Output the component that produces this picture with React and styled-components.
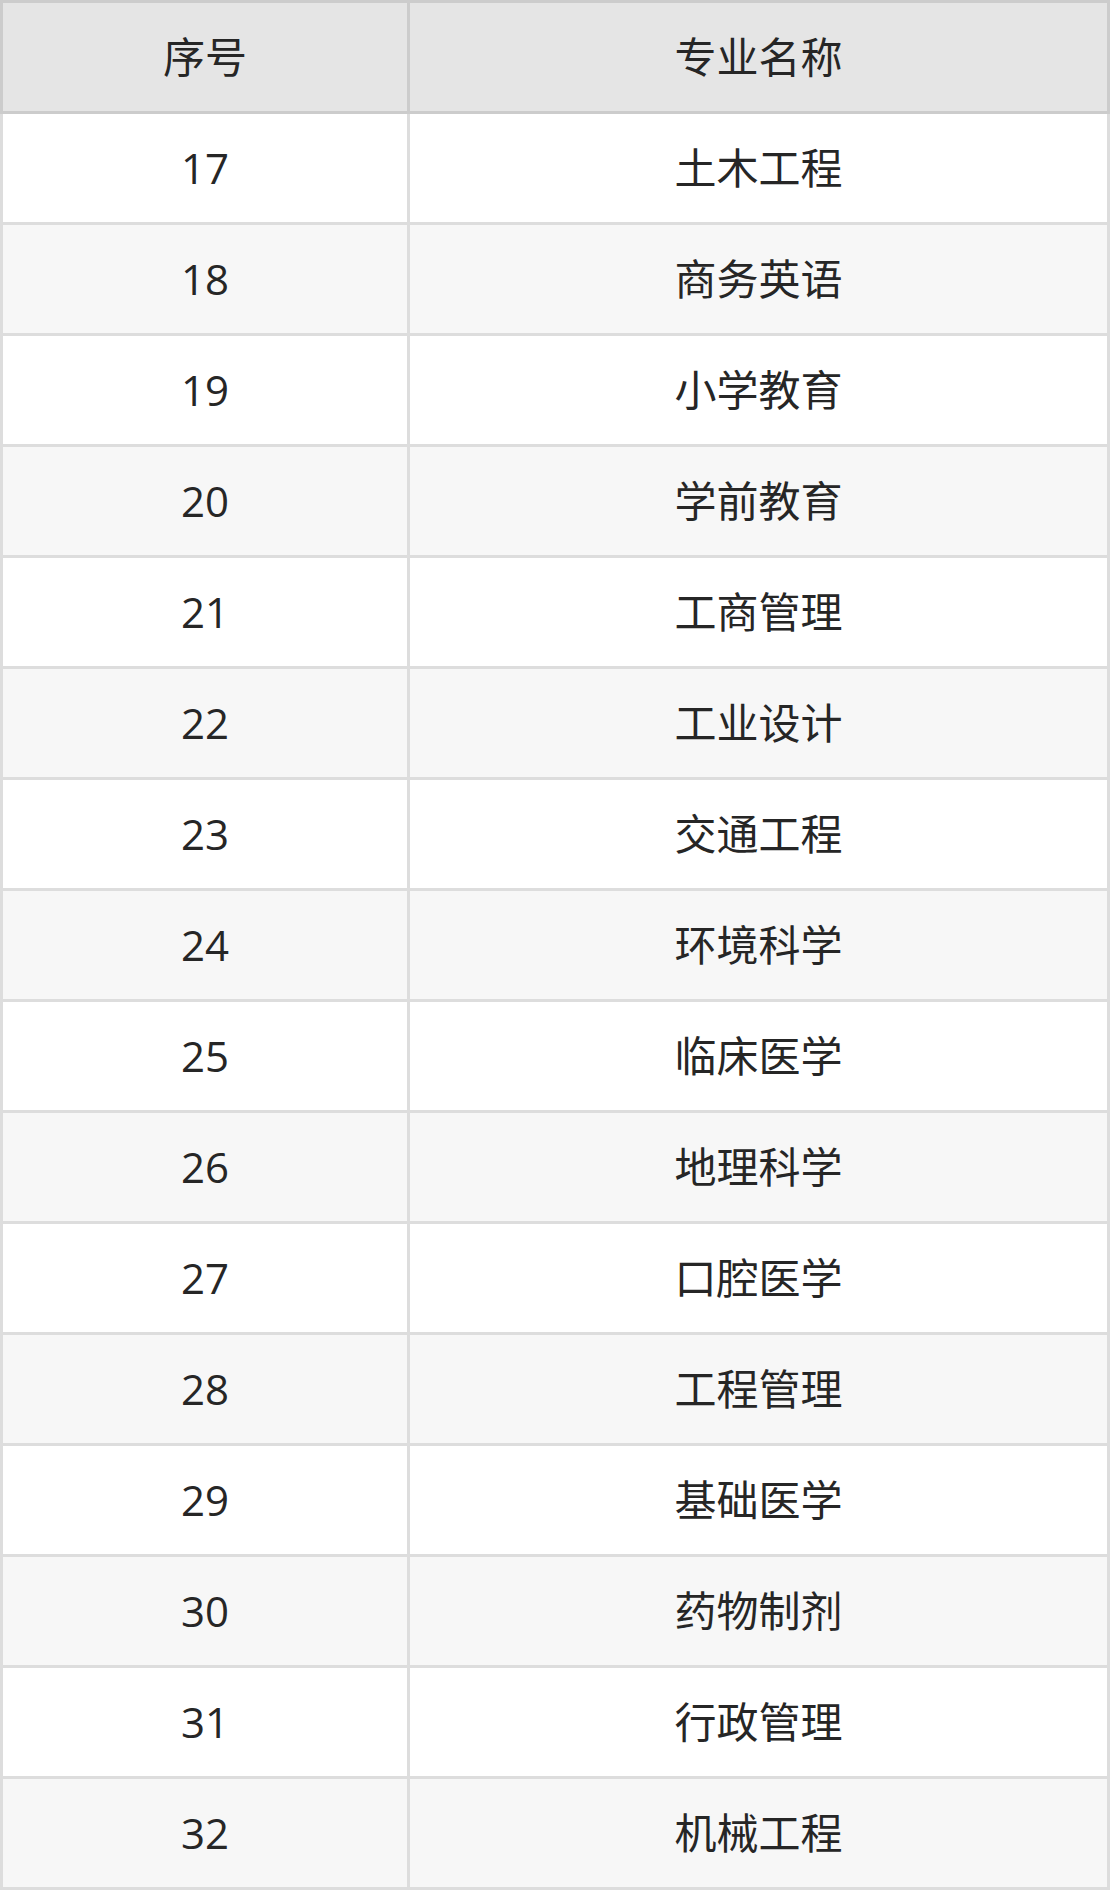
import React from "react";
import styled, { createGlobalStyle } from "styled-components";

const GlobalStyle = createGlobalStyle`
	html, body {
		margin: 0;
		padding: 0;
		background: #ffffff;
	}
	* {
		box-sizing: border-box;
	}
`;

const Table = styled.div`
	display: grid;
	grid-template-columns: 410px 700px;
	width: 1110px;
	font-family: "Open Sans", "Noto Sans CJK SC", sans-serif;
	font-size: 42px;
	color: #262626;
`;

const Cell = styled.div`
	display: flex;
	align-items: center;
	justify-content: center;
	height: ${(p) => (p.$head ? "114px" : "111px")};
	background: ${(p) => (p.$head ? "#e5e5e5" : p.$alt ? "#f7f7f7" : "#ffffff")};
	border-right: 3px solid ${(p) => (p.$head ? "#cccccc" : "#dddddd")};
	border-bottom: 3px solid ${(p) => (p.$head ? "#cccccc" : "#dddddd")};
	border-left: ${(p) => (p.$first ? `3px solid ${p.$head ? "#cccccc" : "#dddddd"}` : "none")};
	border-top: ${(p) => (p.$head ? "3px solid #cccccc" : "none")};
	line-height: 1;
	white-space: nowrap;
`;

const majors = [
	"土木工程",
	"商务英语",
	"小学教育",
	"学前教育",
	"工商管理",
	"工业设计",
	"交通工程",
	"环境科学",
	"临床医学",
	"地理科学",
	"口腔医学",
	"工程管理",
	"基础医学",
	"药物制剂",
	"行政管理",
	"机械工程",
];

const App = () => {
	return (
		<>
			<GlobalStyle />
			<Table>
				<Cell $head $first>序号</Cell>
				<Cell $head>专业名称</Cell>
				{majors.map((name, i) => (
					<React.Fragment key={name}>
						<Cell $first $alt={i % 2 === 1}>{17 + i}</Cell>
						<Cell $alt={i % 2 === 1}>{name}</Cell>
					</React.Fragment>
				))}
			</Table>
		</>
	);
};

export default App;
